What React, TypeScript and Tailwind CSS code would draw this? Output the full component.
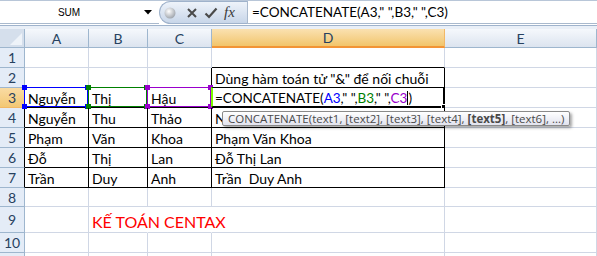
import React from "react";

const data: Record<number, React.ReactNode[]> = {
  2: ["", "", "", 'Dùng hàm toán tử "&" để nối chuỗi', ""],
  3: ["Nguyễn", "Thị", "Hậu", "", ""],
  4: ["Nguyễn", "Thu", "Thảo", "Nguyễn Thu Thảo", ""],
  5: ["Phạm", "Văn", "Khoa", "Phạm Văn Khoa", ""],
  6: ["Đỗ", "Thị", "Lan", "Đỗ Thị Lan", ""],
  7: ["Trần", "Duy", "Anh", "Trần  Duy Anh", ""],
};

const ROWS = [1, 2, 3, 4, 5, 6, 7, 8, 9, 10, 11];
const COLS = ["A", "B", "C", "D", "E"];

function rowH(r: number) {
  if (r === 8) return "h-[19px]";
  if (r === 9) return "h-[26px]";
  return "h-[20px]";
}

function rightClass(r: number, c: number) {
  if (r === 9 && (c === 1 || c === 2)) return "border-r-transparent";
  if (c <= 3 && r >= 3 && r <= 7) return "border-r-black";
  if ((c === 3 || c === 2) && r === 2) return "border-r-black";
  return "border-r-[#d0d7e5]";
}

function bottomClass(r: number, c: number) {
  if (c <= 3 && r >= 2 && r <= 7) return "border-b-black";
  if (c === 3 && r === 1) return "border-b-black";
  return "border-b-[#d0d7e5]";
}

function RangeBox({ color }: { color: "blue" | "green" | "purple" }) {
  const box =
    color === "blue"
      ? "border-[#0000ff]"
      : color === "green"
      ? "border-[#008000]"
      : "border-[#9900cc]";
  const h =
    color === "blue" ? "bg-[#0000ff]" : color === "green" ? "bg-[#008000]" : "bg-[#9900cc]";
  return (
    <div className={`pointer-events-none absolute -top-px -left-px right-0 bottom-0 border ${box}`}>
      <div className={`absolute -top-[3px] -left-[3px] h-[5px] w-[5px] ${h}`} />
      <div className={`absolute -top-[3px] -right-[3px] h-[5px] w-[5px] ${h}`} />
      <div className={`absolute -bottom-[3px] -left-[3px] h-[5px] w-[5px] ${h}`} />
      <div className={`absolute -bottom-[3px] -right-[3px] h-[5px] w-[5px] ${h}`} />
    </div>
  );
}

function ActiveFormula() {
  return (
    <span className="text-[13.5px]">
      =CONCATENATE(<span className="text-[#0000ff]">A3</span>," ",
      <span className="text-[#008000]">B3</span>," ",
      <span className="text-[#9900cc]">C3</span>
      <span className="inline-block h-[14px] w-px translate-y-[2px] bg-black" />)
    </span>
  );
}

function Cell({ r, c }: { r: number; c: number }) {
  const content = data[r]?.[c] ?? "";
  return (
    <div
      className={`relative flex items-end whitespace-pre border-r border-b pl-[3px] text-[14px] leading-[17px] text-black ${rowH(r)} ${rightClass(r, c)} ${bottomClass(r, c)}`}
    >
      {r === 9 && c === 1 ? (
        <span className="text-[16px] leading-[20px] text-[#ff0000]">KẾ TOÁN CENTAX</span>
      ) : r === 3 && c === 3 ? (
        <ActiveFormula />
      ) : (
        content
      )}
      {r === 3 && c === 0 && <RangeBox color="blue" />}
      {r === 3 && c === 1 && <RangeBox color="green" />}
      {r === 3 && c === 2 && <RangeBox color="purple" />}
      {r === 3 && c === 3 && (
        <div className="pointer-events-none absolute -top-px -left-px right-0 bottom-0 border border-black border-l-2 border-l-[#7cfc00]">
          <div className="absolute -bottom-[3px] -right-[3px] h-[5px] w-[5px] border border-white bg-black" />
        </div>
      )}
    </div>
  );
}

function RowHeader({ r }: { r: number }) {
  if (r === 3) {
    return (
      <div className="flex h-[20px] items-center justify-center border-r border-b border-r-[#f29436] border-b-[#f2b866] bg-gradient-to-b from-[#f9dba3] to-[#f3c874] text-[14px] text-[#27415f]">
        {r}
      </div>
    );
  }
  const right = r >= 4 && r <= 7 ? "border-r-black" : "border-r-[#9eb6ce]";
  return (
    <div
      className={`flex items-center justify-center border-r border-b border-b-[#9eb6ce] bg-[#e4ecf7] text-[14px] text-[#27415f] ${right} ${rowH(r)}`}
    >
      {r === 11 ? "" : r}
    </div>
  );
}

function ColHeader({ name }: { name: string }) {
  if (name === "D") {
    return (
      <div className="flex h-[19px] items-center justify-center border-r border-b-2 border-r-[#f2b866] border-b-[#f29436] bg-gradient-to-b from-[#fae1b0] to-[#f2c56a] text-[14px] text-[#27415f]">
        {name}
      </div>
    );
  }
  return (
    <div className="flex h-[19px] items-center justify-center border-r border-b border-[#9eb6ce] bg-gradient-to-b from-[#f5f8fc] to-[#dce4ef] text-[14px] text-[#27415f]">
      {name}
    </div>
  );
}

function FormulaBar() {
  return (
    <div className="flex h-[25px] border-t border-[#b8c6d8] bg-white">
      <div className="flex h-[23px] w-[159px] items-center border-b border-[#a9b9cd]">
        <span className="w-[138px] text-center font-['Liberation_Sans',sans-serif] text-[10px] text-black">
          SUM
        </span>
        <svg width="8" height="5" viewBox="0 0 8 5" className="ml-[6px]">
          <path d="M0 0 L8 0 L4 4.5 Z" fill="#000" />
        </svg>
      </div>
      <div className="flex h-[23px] w-[88px] items-center rounded-l-full border border-r-0 border-[#9fb2cb] bg-gradient-to-b from-[#eef3fa] to-[#c8d6e9]">
        <svg width="14" height="14" viewBox="0 0 14 14" className="ml-[3px]">
          <defs>
            <radialGradient id="ball" cx="0.4" cy="0.35" r="0.7">
              <stop offset="0" stopColor="#ffffff" />
              <stop offset="1" stopColor="#9aa0a8" />
            </radialGradient>
          </defs>
          <circle cx="7" cy="7" r="5.5" fill="url(#ball)" />
        </svg>
        <svg width="12" height="12" viewBox="0 0 12 12" className="ml-[9px]">
          <path d="M2 2 L10 10 M10 2 L2 10" stroke="#4a4a4a" strokeWidth="2" />
        </svg>
        <svg width="14" height="12" viewBox="0 0 14 12" className="ml-[6px]">
          <path d="M1.5 6.5 L5 10 L12.5 1.5" stroke="#4a4a4a" strokeWidth="2.2" fill="none" />
        </svg>
        <span className="ml-[6px] font-['Liberation_Serif',serif] text-[15px] italic leading-none text-[#3a3a3a]">
          fx
        </span>
      </div>
      <div className="flex h-[23px] flex-1 items-center border-b border-l border-[#a9b9cd] pl-[4px] text-[13.5px] text-black">
        =CONCATENATE(A3," ",B3," ",C3)
      </div>
    </div>
  );
}

export default function App() {
  return (
    <div className="relative h-[256px] w-[597px] overflow-hidden bg-white font-['Lato',sans-serif]">
      <FormulaBar />
      <div className="h-[4px] border-t border-[#9fb3cc] bg-[#e9eff7]" />
      <div className="grid grid-cols-[25px_64px_59px_64px_233px_1fr]">
        <div className="flex h-[19px] items-end justify-end border-r border-b border-[#9eb6ce] bg-[#d5dfec]">
          <svg width="12" height="12" viewBox="0 0 12 12" className="mr-[2px] mb-[2px]">
            <path d="M12 0 L12 12 L0 12 Z" fill="#eef3f9" />
          </svg>
        </div>
        {COLS.map((c) => (
          <ColHeader key={c} name={c} />
        ))}
        {ROWS.map((r) => (
          <React.Fragment key={r}>
            <RowHeader r={r} />
            {COLS.map((_, c) => (
              <Cell key={c} r={r} c={c} />
            ))}
          </React.Fragment>
        ))}
      </div>
      <div className="absolute left-[222px] top-[111px] flex h-[15px] items-center whitespace-nowrap rounded-[2px] border border-[#8a8a8a] bg-gradient-to-b from-white to-[#e2e3ee] px-[5px] font-['Open_Sans',sans-serif] text-[11.5px] text-[#4a4a4a] shadow-[2px_2px_3px_rgba(0,0,0,0.35)]">
        <span>
          CONCATENATE(text1, [text2], [text3], [text4], <b>[text5]</b>, [text6], ...)
        </span>
      </div>
    </div>
  );
}
